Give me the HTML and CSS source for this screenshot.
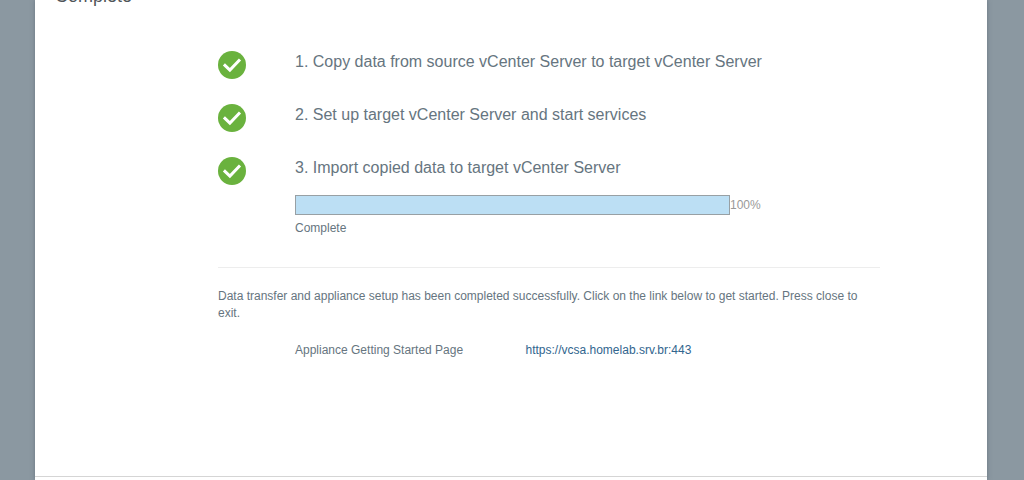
FILE: index.html
```html
<!DOCTYPE html>
<html lang="en">
<head>
<meta charset="utf-8">
<title>Complete</title>
<link rel="stylesheet" href="styles.css">
</head>
<body>
<svg width="0" height="0" class="defs">
  <symbol id="check" viewBox="0 0 28 28">
    <circle cx="14" cy="14" r="14" fill="#6ab23e"/>
    <path d="M5.9 13.3L11.9 19.1L22 8.5" fill="none" stroke="#fff" stroke-width="3"/>
  </symbol>
</svg>
<main class="dialog">
  <div class="body">
    <h1 class="title">Complete</h1>
    <section class="content">
      <div class="step"><svg class="icon"><use href="#check"/></svg><h2 class="label">1. Copy data from source vCenter Server to target vCenter Server</h2></div>
      <div class="step"><svg class="icon"><use href="#check"/></svg><h2 class="label">2. Set up target vCenter Server and start services</h2></div>
      <div class="step"><svg class="icon"><use href="#check"/></svg><h2 class="label">3. Import copied data to target vCenter Server</h2></div>
      <div class="progress"><div class="bar"></div><span class="percent">100%</span></div>
      <p class="status">Complete</p>
      <p class="message">Data transfer and appliance setup has been completed successfully. Click on the link below to get started. Press close to exit.</p>
      <div class="link-row"><span>Appliance Getting Started Page</span><a class="link" href="#">https://vcsa.homelab.srv.br:443</a></div>
    </section>
  </div>
  <footer class="footer"></footer>
</main>
</body>
</html>
```
FILE: styles.css
```css
* { box-sizing: border-box; }
body {
  margin: 0;
  height: 480px;
  overflow: hidden;
  background: #8b98a1;
  color: #667580;
  font: 12px/17px "Liberation Sans", Arial, sans-serif;
}
h1, h2, p { margin: 0; font-weight: normal; }
.defs { display: block; }
.dialog {
  width: 952px;
  height: 480px;
  margin-left: 35px;
  background: #fff;
  box-shadow: 0 0 4px rgba(70, 80, 95, .5);
}
.body { display: flow-root; height: 476px; }
.title {
  height: 65px;
  margin: -14px 0 0 20px;
  color: #505559;
  font-size: 18px;
  line-height: 20px;
}
.content { width: 662px; margin-left: 183px; }
.step { display: flex; height: 53px; gap: 49px; }
.icon { width: 28px; height: 28px; flex: none; }
.label { font-size: 16px; line-height: 22px; white-space: nowrap; }
.progress {
  display: flex;
  align-items: center;
  height: 20px;
  margin: -15px 0 0 77px;
}
.bar { width: 435px; height: 20px; border: 1px solid #98a0a4; background: #bcdff4; }
.percent { color: #999; }
.status { margin: 5px 0 0 77px; }
.message {
  margin-top: 30px;
  padding: 20px 15px 0 0;
  border-top: 1px solid #ededed;
}
.link-row { display: grid; grid-template-columns: 230.5px auto; margin: 20px 0 0 77px; }
.link { color: #31658e; text-decoration: none; }
.footer { height: 4px; border-top: 1px solid #d5d5d5; }
```
